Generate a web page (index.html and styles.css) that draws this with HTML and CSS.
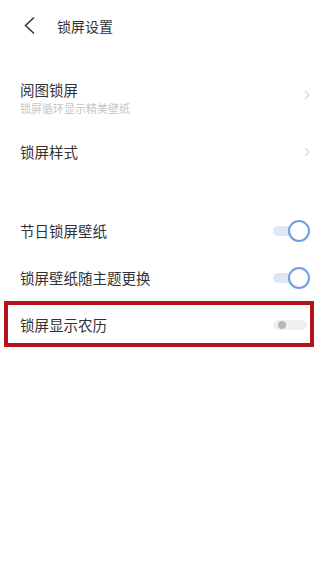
FILE: index.html
```html
<html>
<head>
  <link rel="stylesheet" href="styles.css">
</head>
<body>
<div class="page">
  <div class="header">
    <svg class="back" width="12" height="20" viewBox="0 0 12 20">
      <path d="M10 1.5 L1.5 9.5 L10 17.5" fill="none" stroke="#333" stroke-width="1.5"/>
    </svg>
    <span class="title">锁屏设置</span>
  </div>

  <div class="group first">
    <div class="row tall">
      <div class="row-text">
        <div class="row-label">阅图锁屏</div>
        <div class="row-sub">锁屏循环显示精美壁纸</div>
      </div>
      <svg class="arrow" width="6" height="10" viewBox="0 0 6 10">
        <path d="M1 1 L5 5 L1 9" fill="none" stroke="#d6d6d6" stroke-width="1.2"/>
      </svg>
    </div>
    <div class="row">
      <div class="row-label">锁屏样式</div>
      <svg class="arrow" width="6" height="10" viewBox="0 0 6 10">
        <path d="M1 1 L5 5 L1 9" fill="none" stroke="#d6d6d6" stroke-width="1.2"/>
      </svg>
    </div>
  </div>

  <div class="group second">
    <div class="row">
      <div class="row-label">节日锁屏壁纸</div>
      <div class="switch on"><span class="knob"></span></div>
    </div>
    <div class="row">
      <div class="row-label">锁屏壁纸随主题更换</div>
      <div class="switch on"><span class="knob"></span></div>
    </div>
    <div class="row marked">
      <div class="row-label">锁屏显示农历</div>
      <div class="switch off"><span class="knob"></span></div>
    </div>
  </div>
</div>
</body>
</html>
```

FILE: styles.css
```css
body {
  margin: 0;
  padding: 0;
  background: #fff;
  font-family: "Noto Sans CJK SC", "Noto Sans", sans-serif;
  color: #333;
}

.page {
  width: 332px;
  height: 568px;
  overflow: hidden;
}

.header {
  display: flex;
  align-items: center;
  height: 52px;
  padding-left: 24px;
}

.back {
  display: block;
}

.title {
  margin-left: 21px;
  font-size: 14px;
  color: #333;
}

.group.first {
  margin-top: 20px;
}

.group.second {
  margin-top: 32px;
}

.row {
  position: relative;
  display: flex;
  align-items: center;
  justify-content: space-between;
  height: 47px;
  padding: 0 22px 0 20px;
}

.row.tall {
  height: 56px;
  align-items: flex-start;
}

.row.tall .row-text {
  padding-top: 9px;
}

.row.tall .arrow {
  margin-top: 18px;
}

.row-label {
  font-size: 14.5px;
  line-height: 18px;
  color: #333;
}

.row-sub {
  margin-top: 3px;
  font-size: 11px;
  line-height: 12px;
  color: #c6c6c6;
}

.arrow {
  display: block;
}

.switch {
  position: relative;
  width: 37px;
  height: 22px;
}

.switch.on::before {
  content: "";
  position: absolute;
  left: 0;
  top: 6px;
  width: 28px;
  height: 10px;
  border-radius: 5px;
  background: #dde8f6;
}

.switch.on .knob {
  position: absolute;
  right: 0;
  top: 0;
  width: 18px;
  height: 18px;
  border-radius: 50%;
  border: 2px solid #6f9fe0;
  background: #fff;
}

.switch.off::before {
  content: "";
  position: absolute;
  left: 0;
  top: 6px;
  width: 34px;
  height: 10px;
  border-radius: 5px;
  background: #efefef;
}

.switch.off .knob {
  position: absolute;
  left: 5px;
  top: 7px;
  width: 8px;
  height: 8px;
  border-radius: 50%;
  background: #b8b8b8;
}

.row.marked::after {
  content: "";
  position: absolute;
  left: 4px;
  right: 18px;
  top: 0;
  bottom: 1px;
  border: 4px solid #b3131b;
}
```
